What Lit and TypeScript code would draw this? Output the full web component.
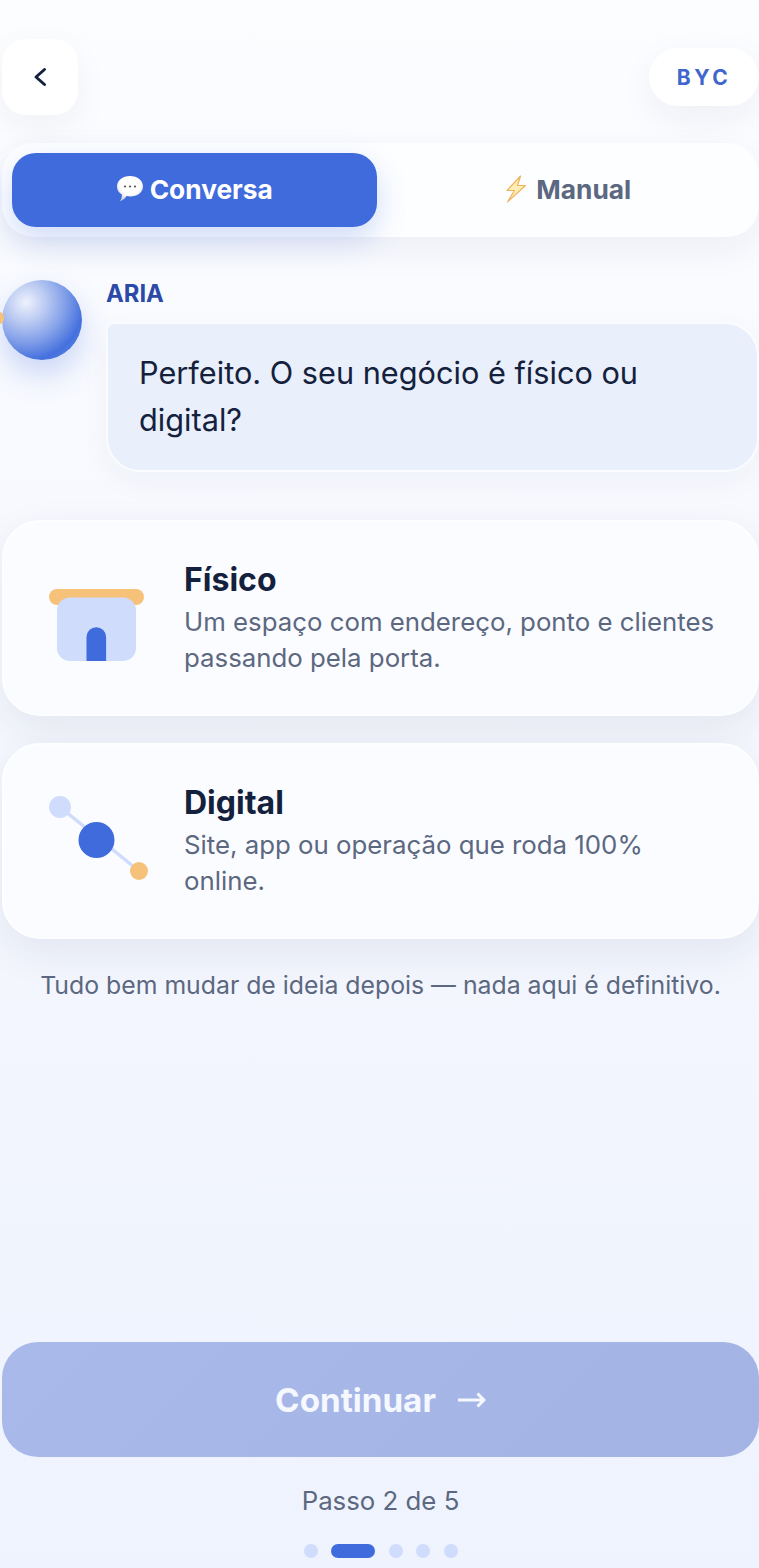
import { LitElement, html, css } from "lit";
import { customElement } from "lit/decorators.js";

@customElement("app-root")
export class AppRoot extends LitElement {
  static styles = css`
    :host {
      display: block;
      height: 1568px;
      overflow: hidden;
      font-family: Inter, "Liberation Sans", sans-serif;
      background: linear-gradient(180deg, #fcfdff 0%, #f6f8fe 40%, #eff3fe 100%);
      color: #14213d;
    }
    .page {
      box-sizing: border-box;
      height: 1568px;
      padding: 39px 0 0 2px;
      display: flex;
      flex-direction: column;
    }
    .top {
      display: flex;
      justify-content: space-between;
      align-items: center;
      height: 76px;
    }
    .back {
      width: 76px;
      height: 76px;
      border-radius: 24px;
      background: #fff;
      display: flex;
      align-items: center;
      justify-content: center;
      box-shadow: 0 12px 36px rgba(30, 40, 80, 0.05);
    }
    .byc {
      width: 110px;
      height: 58px;
      border-radius: 29px;
      background: #fff;
      display: flex;
      align-items: center;
      justify-content: center;
      color: #3f66cc;
      font-size: 21px;
      font-weight: 700;
      letter-spacing: 3.6px;
      box-shadow: 0 12px 36px rgba(30, 40, 80, 0.06);
    }
    .tabs {
      margin-top: 28px;
      height: 94px;
      box-sizing: border-box;
      padding: 10px;
      border-radius: 32px;
      background: #fdfeff;
      display: grid;
      grid-template-columns: 1fr 1fr;
      gap: 8px;
      box-shadow: 0 12px 36px rgba(30, 40, 80, 0.06);
    }
    .tab {
      border-radius: 24px;
      display: flex;
      align-items: center;
      justify-content: center;
      gap: 6px;
      padding-bottom: 2px;
      font-size: 26.3px;
      font-weight: 700;
      color: #5b6880;
    }
    .tab.on {
      background: #3f6bdd;
      color: #fff;
      box-shadow: 0 12px 30px rgba(63, 107, 221, 0.24);
    }
    .chat {
      margin-top: 43px;
      display: flex;
      gap: 24px;
      align-items: flex-start;
    }
    .orbwrap {
      position: relative;
      width: 80px;
      height: 80px;
      flex: none;
    }
    .orb {
      width: 80px;
      height: 80px;
      border-radius: 50%;
      background: radial-gradient(circle at 30% 28%, #eef2fd 0%, #bccbf2 24%, #84a1e9 48%, #4571de 72%, #648ae4 100%);
      box-shadow: 0 14px 30px rgba(63, 107, 221, 0.26);
    }
    .spark {
      position: absolute;
      left: -7px;
      top: 32px;
      width: 9px;
      height: 12px;
      border-radius: 50%;
      background: #f6c27a;
    }
    .msg {
      flex: 1;
      min-width: 0;
    }
    .name {
      font-size: 23.8px;
      font-weight: 700;
      color: #2b4aa8;
      line-height: 28px;
    }
    .bubble {
      margin-top: 14px;
      box-sizing: border-box;
      height: 150px;
      border: 2px solid #fbfcff;
      border-radius: 8px 34px 34px 34px;
      background: #e9effb;
      padding: 25px 20px 0 31px;
      font-size: 30.7px;
      line-height: 47px;
      color: #14213d;
      box-shadow: 0 10px 30px rgba(30, 40, 80, 0.04);
    }
    .cards {
      margin-top: 48px;
      display: flex;
      flex-direction: column;
      gap: 27px;
    }
    .card {
      height: 196px;
      box-sizing: border-box;
      border: 2px solid #fdfeff;
      border-radius: 38px;
      background: #fbfcff;
      padding: 0 36px 0 42px;
      display: flex;
      align-items: center;
      gap: 36px;
      box-shadow: 0 14px 40px rgba(30, 40, 80, 0.08);
    }
    .card svg {
      flex: none;
    }
    .ctitle {
      font-size: 32px;
      font-weight: 700;
      line-height: 38px;
      color: #14213d;
    }
    .cdesc {
      font-size: 25.8px;
      line-height: 36px;
      color: #5b6880;
      margin-top: 5px;
    }
    .hint {
      margin-top: 31px;
      text-align: center;
      font-size: 24.8px;
      line-height: 30px;
      color: #5b6880;
    }
    .foot {
      margin-top: auto;
      padding-bottom: 10px;
      display: flex;
      flex-direction: column;
      align-items: center;
    }
    .cta {
      width: 100%;
      height: 115px;
      border-radius: 36px;
      background: linear-gradient(135deg, #a9baea, #a3b3e4);
      color: #f5f8fe;
      display: flex;
      align-items: center;
      justify-content: center;
      gap: 22px;
      font-size: 33.2px;
      font-weight: 700;
    }
    .step {
      margin-top: 29px;
      font-size: 25.8px;
      line-height: 30px;
      color: #5b6880;
    }
    .dots {
      margin-top: 28px;
      display: flex;
      gap: 13.5px;
    }
    .dot {
      width: 14px;
      height: 14px;
      border-radius: 7px;
      background: #cfdcfb;
    }
    .dot.on {
      width: 44px;
      background: #3f6bdd;
    }
  `;

  render() {
    return html`
      <div class="page">
        <div class="top">
          <div class="back">
            <svg width="16" height="24" viewBox="0 0 16 24" fill="none">
              <path d="M12.5 4.5 L4 12 L12.5 19.5" stroke="#14213d" stroke-width="3" stroke-linecap="round" stroke-linejoin="round" />
            </svg>
          </div>
          <div class="byc">BYC</div>
        </div>
        <div class="tabs">
          <div class="tab on">
            <svg width="28" height="28" viewBox="0 0 28 28">
              <defs>
                <radialGradient id="b" cx="50%" cy="35%" r="65%">
                  <stop offset="0.6" stop-color="#ffffff" />
                  <stop offset="1" stop-color="#c9ccd4" />
                </radialGradient>
              </defs>
              <path d="M14 1 C21.5 1 27 5.6 27 11.5 C27 17.4 21.5 21.5 14 21.5 C12.8 21.5 11.6 21.4 10.5 21.1 C9 23.4 6.8 25.4 3.8 26.4 C5.4 24.4 6 22 5.9 19.6 C2.9 17.8 1 15 1 11.5 C1 5.6 6.5 1 14 1 Z" fill="url(#b)" />
              <circle cx="9" cy="11.5" r="1.1" fill="#555" />
              <circle cx="14" cy="11.5" r="1.1" fill="#555" />
              <circle cx="19" cy="11.5" r="1.1" fill="#555" />
            </svg>
            <span>Conversa</span>
          </div>
          <div class="tab">
            <svg width="28" height="28" viewBox="0 0 28 28">
              <path d="M18.5 1 L5 15.5 L12.5 15.5 L5.5 27 L23.5 10.5 L15.5 10.5 Z" fill="#fdeeb8" stroke="#eeb35c" stroke-width="1.2" stroke-linejoin="round" />
            </svg>
            <span>Manual</span>
          </div>
        </div>
        <div class="chat">
          <div class="orbwrap">
            <div class="spark"></div>
            <div class="orb"></div>
          </div>
          <div class="msg">
            <div class="name">ARIA</div>
            <div class="bubble">Perfeito. O seu negócio é físico ou digital?</div>
          </div>
        </div>
        <div class="cards">
          <div class="card">
            <svg width="102" height="104" viewBox="0 0 102 104">
              <rect x="3" y="23" width="95" height="16" rx="8" fill="#f6c27a" />
              <rect x="11" y="31.5" width="79" height="63.5" rx="13" fill="#cfdcfb" />
              <path d="M40.5 95 V71 a9.8 9.8 0 0 1 19.6 0 V95 Z" fill="#3f6bdd" />
            </svg>
            <div>
              <div class="ctitle">Físico</div>
              <div class="cdesc">Um espaço com endereço, ponto e clientes passando pela porta.</div>
            </div>
          </div>
          <div class="card">
            <svg width="102" height="104" viewBox="0 0 102 104">
              <line x1="14" y1="18" x2="93" y2="82" stroke="#cfdcfb" stroke-width="3.5" />
              <circle cx="14" cy="18" r="11" fill="#cfdcfb" />
              <circle cx="50.5" cy="51" r="18" fill="#3f6bdd" />
              <circle cx="93" cy="82" r="9" fill="#f6c27a" />
            </svg>
            <div>
              <div class="ctitle">Digital</div>
              <div class="cdesc">Site, app ou operação que roda 100% online.</div>
            </div>
          </div>
        </div>
        <div class="hint">Tudo bem mudar de ideia depois — nada aqui é definitivo.</div>
        <div class="foot">
          <div class="cta">
            <span>Continuar</span>
            <svg width="28" height="18" viewBox="0 0 28 18" fill="none">
              <path d="M0 9 H26 M19.5 2.5 L26 9 L19.5 15.5" stroke="#f5f8fe" stroke-width="3" />
            </svg>
          </div>
          <div class="step">Passo 2 de 5</div>
          <div class="dots">
            <div class="dot"></div>
            <div class="dot on"></div>
            <div class="dot"></div>
            <div class="dot"></div>
            <div class="dot"></div>
          </div>
        </div>
      </div>
    `;
  }
}
